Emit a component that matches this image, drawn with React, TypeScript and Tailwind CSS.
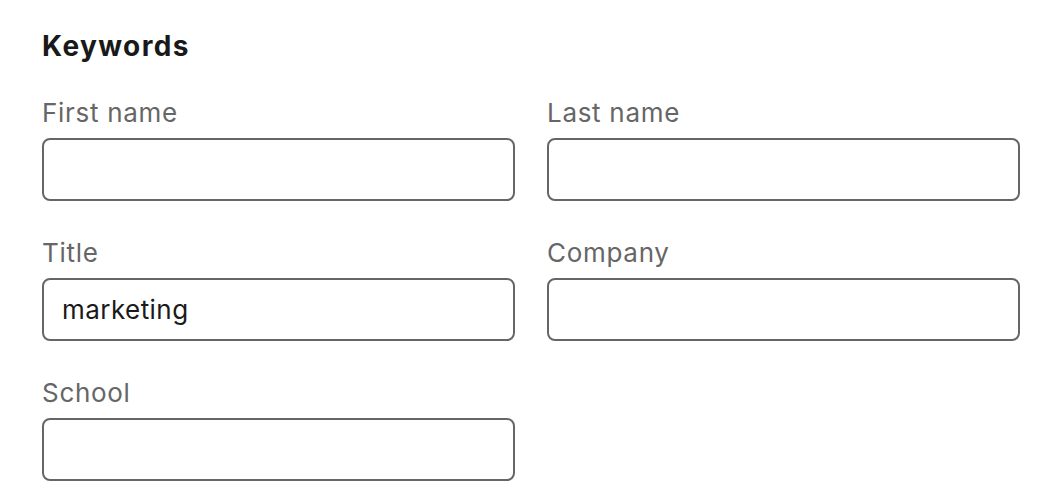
import React from "react";

function Field({ label, value = "" }: { label: string; value?: string }) {
  return (
    <div className="flex flex-col">
      <label className="h-[32px] text-[26px] leading-[32px] tracking-[0.7px] text-[#666666] mb-[9px]">{label}</label>
      <input
        defaultValue={value}
        className="h-[63px] w-full rounded-[8px] border-2 border-[#666666] bg-white px-[18px] text-[26px] tracking-[0.45px] text-[#1a1a1a] outline-none"
        style={{ fontFamily: "Inter, 'Liberation Sans', sans-serif" }}
      />
    </div>
  );
}

export default function App() {
  return (
    <div
      className="w-[1048px] h-[502px] bg-white pl-[42px] pr-[28px] pt-[28px] overflow-hidden"
      style={{ fontFamily: "Inter, 'Liberation Sans', sans-serif" }}
    >
      <h2 className="h-[36px] text-[28px] leading-[36px] font-bold tracking-[1.4px] text-[#191919] mb-[33px]">Keywords</h2>
      <div className="grid grid-cols-2 gap-x-[32px] gap-y-[36px]">
        <Field label="First name" />
        <Field label="Last name" />
        <Field label="Title" value="marketing" />
        <Field label="Company" />
        <Field label="School" />
      </div>
    </div>
  );
}
